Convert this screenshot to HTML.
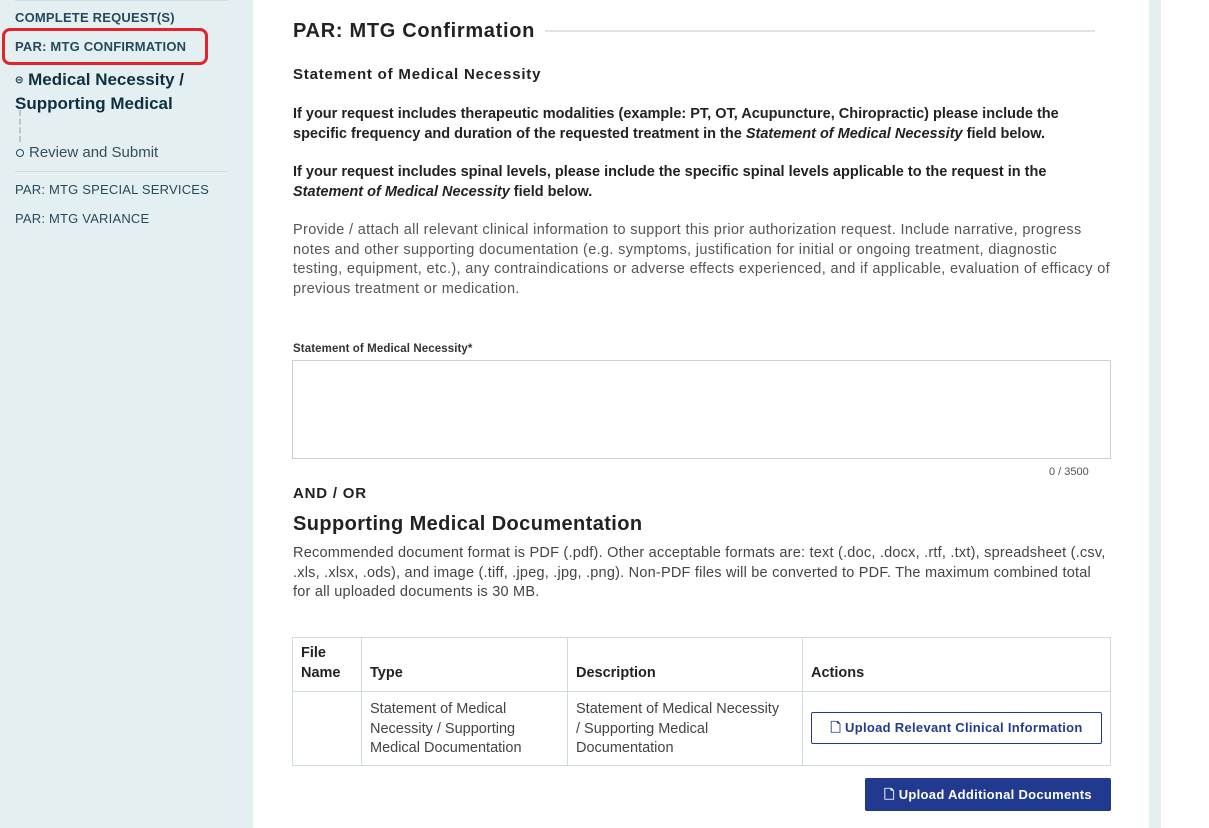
<!DOCTYPE html>
<html><head><meta charset="utf-8"><style>
*{margin:0;padding:0;box-sizing:border-box}
body{width:1209px;height:828px;overflow:hidden;background:#fff;font-family:"Liberation Sans",Arial,sans-serif;position:relative;color:#222}
.a{position:absolute;white-space:nowrap}
#side{position:absolute;left:0;top:0;width:253px;height:828px;background:#e4eff2}
#strip{position:absolute;left:1149px;top:0;width:12px;height:828px;background:#e4eff2}
.nav{color:#254b5a;font-size:13px;letter-spacing:0.2px}
p.t{position:absolute;left:293px;width:830px;font-size:14.5px;line-height:19.5px}
.b{font-weight:bold;color:#222}
.g{color:#555;letter-spacing:0.35px;white-space:nowrap}
table{position:absolute;left:292px;top:637px;width:819px;border-collapse:collapse;font-size:14.5px;line-height:19.5px;color:#444}
td,th{border:1px solid #cfdcdf;vertical-align:top;text-align:left;padding:0 8px}
th{color:#222;font-weight:bold;vertical-align:bottom;padding-bottom:8px;height:54px}
td{height:74px;padding-top:8px}
.btn{position:absolute;font-weight:bold;font-size:13px;text-align:center;border-radius:2px;letter-spacing:0.3px}
</style></head><body>
<div id="side">
<div style="position:absolute;left:15px;top:0;width:213px;height:1px;background:#d0dcdf"></div>
<div class="a nav" style="left:15px;top:10px;font-weight:bold">COMPLETE REQUEST(S)</div>
<div style="position:absolute;left:2px;top:28px;width:206px;height:37px;border:3px solid #e0242a;border-radius:8px"></div>
<div class="a nav" style="left:15px;top:39px;font-weight:bold">PAR: MTG CONFIRMATION</div>
<div class="a" style="left:15px;top:68px;font-size:17px;font-weight:bold;color:#0f3040;line-height:23px"><span style="font-size:10px;vertical-align:2px;color:#254b5a">⊝</span> Medical Necessity /<br>Supporting Medical</div>
<div style="position:absolute;left:19px;top:110px;height:32px;border-left:2px dashed #b8c8cc"></div>
<div style="position:absolute;left:16px;top:149px;width:8px;height:8px;border:1.5px solid #254b5a;border-radius:50%"></div>
<div class="a" style="left:29px;top:144px;font-size:15px;color:#354f5a">Review and Submit</div>
<div style="position:absolute;left:15px;top:171px;width:213px;height:1px;background:#d0dcdf"></div>
<div class="a nav" style="left:15px;top:182px">PAR: MTG SPECIAL SERVICES</div>
<div class="a nav" style="left:15px;top:211px">PAR: MTG VARIANCE</div>
</div>
<div id="strip"></div>
<div class="a" style="left:293px;top:20px;font-size:20px;font-weight:bold;color:#222;letter-spacing:0.7px">PAR: MTG Confirmation</div>
<div style="position:absolute;left:545px;top:30px;width:550px;height:2px;background:#e2e2e2"></div>
<div class="a" style="left:293px;top:66px;font-size:15px;font-weight:bold;letter-spacing:0.8px;color:#222">Statement of Medical Necessity</div>
<p class="t b" style="top:105px">If your request includes therapeutic modalities (example: PT, OT, Acupuncture, Chiropractic) please include the<br>specific frequency and duration of the requested treatment in the <i>Statement of Medical Necessity</i> field below.</p>
<p class="t b" style="top:163px">If your request includes spinal levels, please include the specific spinal levels applicable to the request in the<br><i>Statement of Medical Necessity</i> field below.</p>
<p class="t g" style="top:221px">Provide / attach all relevant clinical information to support this prior authorization request. Include narrative, progress<br>notes and other supporting documentation (e.g. symptoms, justification for initial or ongoing treatment, diagnostic<br>testing, equipment, etc.), any contraindications or adverse effects experienced, and if applicable, evaluation of efficacy of<br>previous treatment or medication.</p>
<div class="a" style="left:293px;top:343px;font-size:11.5px;font-weight:bold;color:#333;letter-spacing:0.1px">Statement of Medical Necessity*</div>
<div style="position:absolute;left:292px;top:360px;width:819px;height:99px;border:1px solid #c8d2d5"></div>
<div class="a" style="left:1049px;top:466px;font-size:11px;color:#555">0 / 3500</div>
<div class="a" style="left:293px;top:485px;font-size:15px;font-weight:bold;letter-spacing:0.8px;color:#222">AND / OR</div>
<div class="a" style="left:293px;top:513px;font-size:20px;font-weight:bold;color:#222;letter-spacing:0.4px">Supporting Medical Documentation</div>
<p class="t g" style="top:544px;color:#444;letter-spacing:0.22px">Recommended document format is PDF (.pdf). Other acceptable formats are: text (.doc, .docx, .rtf, .txt), spreadsheet (.csv,<br>.xls, .xlsx, .ods), and image (.tiff, .jpeg, .jpg, .png). Non-PDF files will be converted to PDF. The maximum combined total<br>for all uploaded documents is 30 MB.</p>
<table>
<tr><th style="width:69px">File<br>Name</th><th style="width:206px">Type</th><th style="width:235px">Description</th><th>Actions</th></tr>
<tr><td></td><td>Statement of Medical<br>Necessity / Supporting<br>Medical Documentation</td><td>Statement of Medical Necessity<br>/ Supporting Medical<br>Documentation</td><td></td></tr>
</table>
<div class="btn" style="left:811px;top:712px;width:291px;height:32px;border:1px solid #233b8c;color:#233b8c;line-height:30px">🗋 Upload Relevant Clinical Information</div>
<div class="btn" style="left:865px;top:778px;width:246px;height:33px;background:#213a8f;color:#fff;line-height:33px">🗋 Upload Additional Documents</div>
</body></html>
